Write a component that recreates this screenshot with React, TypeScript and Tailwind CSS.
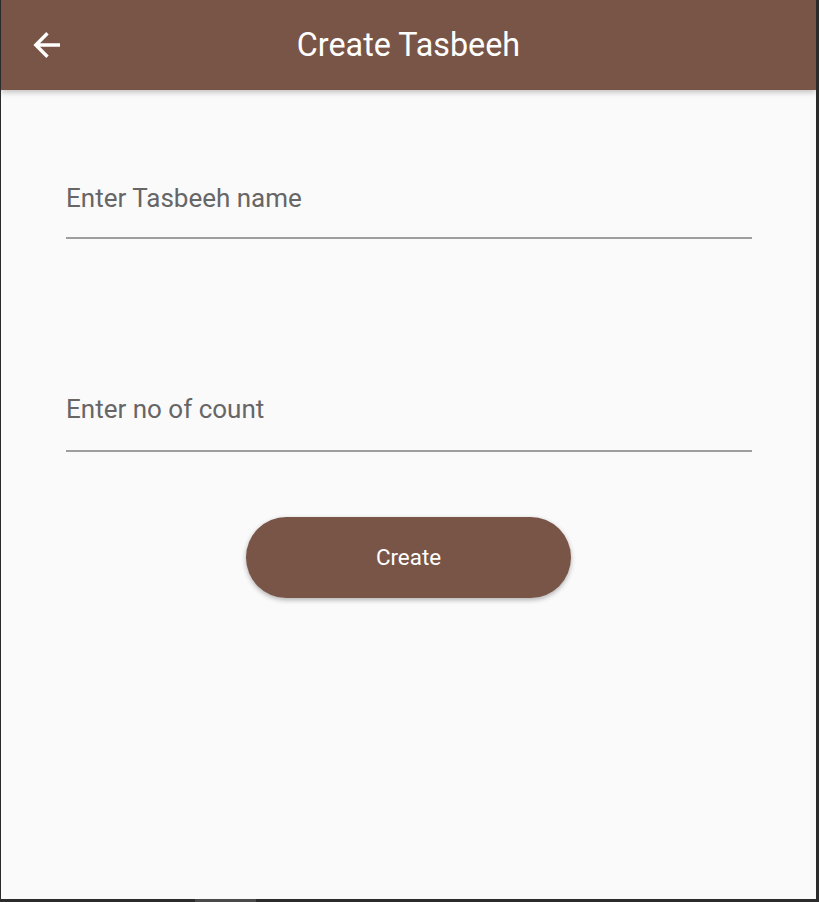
import React from "react";

export default function App() {
  return (
    <div
      className="relative w-[819px] h-[902px] bg-[#2b2b2b] pl-[1px] pr-[3px] pb-[3px]"
      style={{ fontFamily: "Roboto, 'Noto Sans', sans-serif" }}
    >
      <div className="relative w-full h-full bg-[#fafafa] flex flex-col overflow-hidden">
        <header className="relative z-10 h-[90px] shrink-0 bg-[#795548] flex items-center shadow-[0_2px_6px_rgba(0,0,0,0.25)]">
          <div className="pl-[32px] flex items-center">
            <svg width="28" height="28" viewBox="0 0 28 28" fill="none">
              <path d="M27 14H3M14.5 2.3L2.8 14L14.5 25.7" stroke="white" strokeWidth="3.4" strokeLinecap="butt" strokeLinejoin="miter" />
            </svg>
          </div>
          <h1 className="absolute inset-x-0 text-center text-white text-[32.3px] leading-none pointer-events-none">
            Create Tasbeeh
          </h1>
        </header>
        <main className="flex flex-col pl-[65px] pr-[64px]">
          <div className="mt-[93px] h-[56px] border-b-2 border-[#9e9e9e] flex items-start">
            <span className="text-[26px] leading-none text-[#666666] mt-[2px]">Enter Tasbeeh name</span>
          </div>
          <div className="mt-[155px] h-[58px] border-b-2 border-[#9e9e9e] flex items-start">
            <span className="text-[26px] leading-none text-[#666666] mt-[2px]">Enter no of count</span>
          </div>
          <div className="flex justify-center mt-[65px]">
            <button className="w-[325px] h-[81px] rounded-full bg-[#795548] text-white text-[22.4px] shadow-[0_2px_5px_rgba(0,0,0,0.3)] -ml-[1px]">
              Create
            </button>
          </div>
        </main>
      </div>
      <div className="absolute bottom-0 left-[195px] w-[61px] h-[3px] bg-[#4a4a4a]" />
    </div>
  );
}
